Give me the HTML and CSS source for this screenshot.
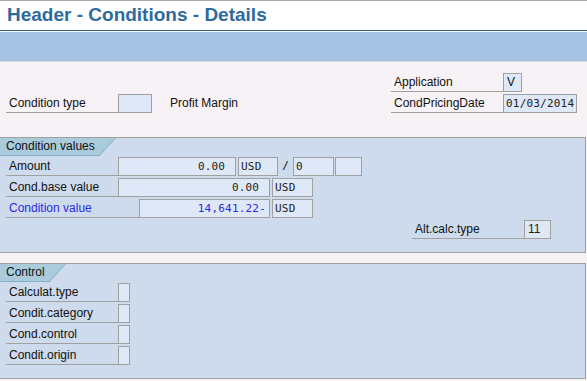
FILE: index.html
```html
<!DOCTYPE html>
<html>
<head>
<meta charset="utf-8">
<link rel="stylesheet" href="styles.css">
</head>
<body>
<div class="titlebar"><h1 class="title">Header - Conditions - Details</h1></div>
<div class="toolbar"></div>
<div class="top">
  <div class="row">
    <span class="lbl">Condition type</span><span class="inp w-ct"></span><span class="desc">Profit Margin</span>
  </div>
  <div class="rgroup">
    <div class="row"><span class="lbl">Application</span><span class="inp w-app sans">V</span></div>
    <div class="row"><span class="lbl">CondPricingDate</span><span class="inp w-date mono">01/03/2014</span></div>
  </div>
</div>

<div class="group">
  <div class="tab"><span class="tabtext">Condition values</span><svg class="slant" width="17" height="18" viewBox="0 0 17 18"><polygon points="0,0 16.5,0 0.5,17.5 0,17.5" fill="#a9cbdc"/><line x1="16.5" y1="0" x2="0.5" y2="17.5" stroke="#86aec6" stroke-width="1"/><line x1="0" y1="17.5" x2="1" y2="17.5" stroke="#86aec6" stroke-width="1"/></svg></div>
  <div class="rows">
    <div class="row"><span class="lbl">Amount</span><span class="inp w-amt mono right">0.00 </span><span class="inp w-usd mono ml2">USD</span><span class="slash">/</span><span class="inp w-per mono">0</span><span class="inp w-uom ml1"></span></div>
    <div class="row"><span class="lbl">Cond.base value</span><span class="inp w-base mono right">0.00 </span><span class="inp w-usd2 mono ml2">USD</span></div>
    <div class="row"><span class="lbl lbl-wide blue">Condition value</span><span class="inp w-cv mono right blue">14,641.22-</span><span class="inp w-usd2 mono ml2">USD</span></div>
    <div class="row alt"><span class="lbl">Alt.calc.type</span><span class="inp w-alt sans dark">11</span></div>
  </div>
</div>

<div class="group g2">
  <div class="tab"><span class="tabtext">Control</span><svg class="slant" width="17" height="18" viewBox="0 0 17 18"><polygon points="0,0 16.5,0 0.5,17.5 0,17.5" fill="#a9cbdc"/><line x1="16.5" y1="0" x2="0.5" y2="17.5" stroke="#86aec6" stroke-width="1"/><line x1="0" y1="17.5" x2="1" y2="17.5" stroke="#86aec6" stroke-width="1"/></svg></div>
  <div class="rows">
    <div class="row"><span class="lbl">Calculat.type</span><span class="inp w-chk"></span></div>
    <div class="row"><span class="lbl">Condit.category</span><span class="inp w-chk"></span></div>
    <div class="row"><span class="lbl">Cond.control</span><span class="inp w-chk"></span></div>
    <div class="row"><span class="lbl">Condit.origin</span><span class="inp w-chk"></span></div>
  </div>
</div>
</body>
</html>
```
FILE: styles.css
```css
html, body {
  margin: 0;
  padding: 0;
}
body {
  background: #f7f2f5;
  font-family: "Liberation Sans", Arial, sans-serif;
  font-size: 12px;
  color: #111;
  width: 587px;
  height: 381px;
  overflow: hidden;
}
.titlebar {
  background: #ffffff;
  border-top: 1px solid #a9a9a9;
  border-bottom: 1px solid #2b5f90;
  height: 29px;
  box-sizing: content-box;
}
.title {
  margin: 0;
  padding: 3px 0 0 7px;
  font-size: 19px;
  line-height: 22px;
  font-weight: bold;
  color: #2e6a9d;
}
.toolbar {
  border-top: 1px solid #ffffff;
  background: #a6c3e4;
  height: 29px;
  border-bottom: 1px solid #d3dde1;
}
.top {
  height: 75px;
  box-sizing: border-box;
  display: flex;
  justify-content: space-between;
  align-items: flex-end;
  padding: 0 10px 24px 6px;
}
.rgroup {
  display: flex;
  flex-direction: column;
  gap: 2px;
}
.row {
  display: flex;
  align-items: stretch;
  height: 19px;
}
.lbl {
  width: 112px;
  box-sizing: border-box;
  border-bottom: 1px solid #a0a0a0;
  padding-left: 3px;
  line-height: 19px;
  white-space: nowrap;
}
.lbl-wide { width: 133px; }
.inp {
  box-sizing: border-box;
  height: 19px;
  border: 1px solid #a0a0a0;
  background: #dfe8f7;
  line-height: 17px;
  padding: 0 2px;
  white-space: pre;
  overflow: hidden;
}
.mono {
  font-family: "DejaVu Sans Mono", "Liberation Mono", monospace;
  font-size: 11px;
  letter-spacing: 0.2px;
  color: #222;
}
.sans { padding-left: 3px; }
.right { text-align: right; padding-right: 3px; }
.blue { color: #2a2ae8; }
.dark { color: #2a1e08; }
.desc {
  margin-left: 18px;
  line-height: 19px;
}
.w-ct { width: 34px; }
.w-app { width: 19px; }
.w-date { width: 74px; }
.w-amt { width: 118px; }
.w-usd { width: 40px; }
.w-per { width: 41px; }
.w-uom { width: 27px; }
.w-base { width: 152px; }
.w-cv { width: 131px; }
.w-usd2 { width: 41px; }
.w-alt { width: 27px; }
.w-chk { width: 12px; }
.ml2 { margin-left: 2px; }
.ml1 { margin-left: 1px; }
.slash {
  width: 15px;
  text-align: center;
  line-height: 18px;
  font-family: "DejaVu Sans Mono", monospace;
  font-size: 11px;
}
.alt { margin-left: 406px; }
.group {
  width: 586px;
  height: 116px;
  box-sizing: border-box;
  background: #cddbec;
  border: 1px solid #a0a0a0;
  border-left: none;
}
.g2 { margin-top: 10px; }
.tab {
  display: flex;
  height: 18px;
}
.tabtext {
  background: #a9cbdc;
  border-bottom: 1px solid #86aec6;
  box-sizing: border-box;
  height: 18px;
  line-height: 17px;
  padding-left: 6px;
  padding-right: 4px;
  color: #111;
}
.tab .slant { display: block; }
.rows {
  margin-top: 1px;
  padding-left: 6px;
  display: flex;
  flex-direction: column;
  gap: 2px;
}
```
